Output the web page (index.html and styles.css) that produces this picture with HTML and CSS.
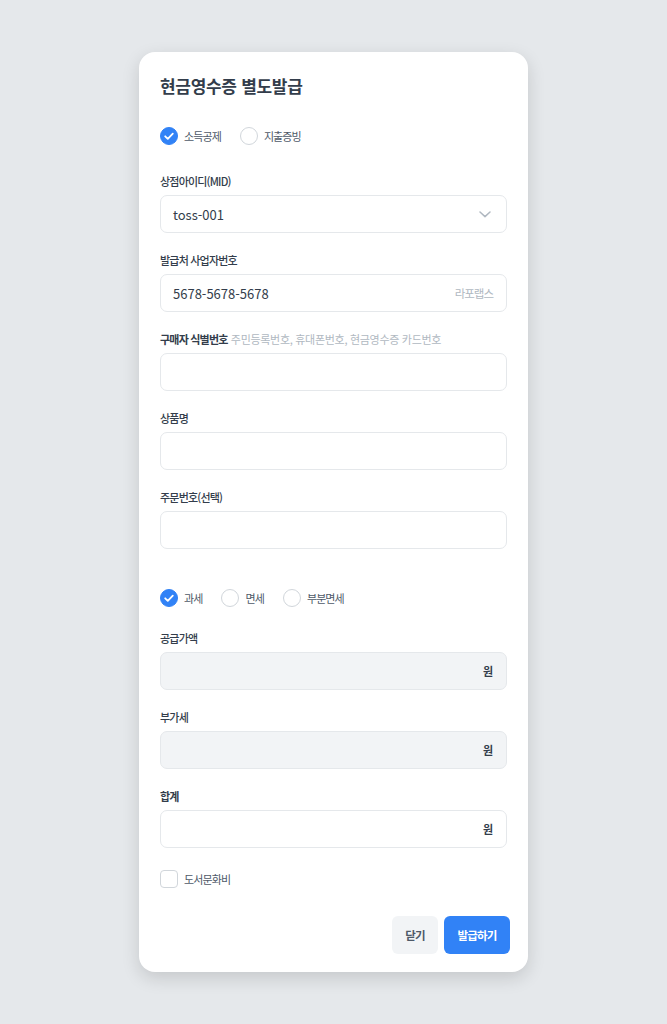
FILE: index.html
```html
<!DOCTYPE html>
<html lang="ko">
<head>
    <meta charset="UTF-8">
    <title>현금영수증 별도발급</title>
    <link rel="stylesheet" href="styles.css">
</head>
<body>
    <div class="modal">
        <h2 class="modal-title">현금영수증 별도발급</h2>

        <!-- 발급 용도 -->
        <div class="choice-row first-row">
            <label class="choice">
                <span class="radio checked">
                    <svg width="18" height="18" viewBox="0 0 18 18"><path d="M5.2 9.3l2.6 2.6 5-5.2" fill="none" stroke="#fff" stroke-width="1.8" stroke-linecap="round" stroke-linejoin="round"/></svg>
                </span>
                <span class="choice-text">소득공제</span>
            </label>
            <label class="choice">
                <span class="radio"></span>
                <span class="choice-text">지출증빙</span>
            </label>
        </div>

        <div class="field-group">
            <div class="field">
                <div class="field-label">상점아이디(MID)</div>
                <div class="field-box">
                    <span class="field-value">toss-001</span>
                    <svg class="chevron" width="12" height="7" viewBox="0 0 12 7"><path d="M1 1l5 4.6L11 1" fill="none" stroke="#b0b8c1" stroke-width="1.5" stroke-linecap="round" stroke-linejoin="round"/></svg>
                </div>
            </div>

            <div class="field">
                <div class="field-label">발급처 사업자번호</div>
                <div class="field-box">
                    <span class="field-value">5678-5678-5678</span>
                    <span class="field-suffix muted">라포랩스</span>
                </div>
            </div>

            <div class="field">
                <div class="field-label strong">구매자 식별번호 <span class="field-hint">주민등록번호, 휴대폰번호, 현금영수증 카드번호</span></div>
                <div class="field-box"></div>
            </div>

            <div class="field">
                <div class="field-label">상품명</div>
                <div class="field-box"></div>
            </div>

            <div class="field">
                <div class="field-label">주문번호(선택)</div>
                <div class="field-box"></div>
            </div>
        </div>

        <!-- 과세 구분 -->
        <div class="choice-row tax-row">
            <label class="choice">
                <span class="radio checked">
                    <svg width="18" height="18" viewBox="0 0 18 18"><path d="M5.2 9.3l2.6 2.6 5-5.2" fill="none" stroke="#fff" stroke-width="1.8" stroke-linecap="round" stroke-linejoin="round"/></svg>
                </span>
                <span class="choice-text">과세</span>
            </label>
            <label class="choice">
                <span class="radio"></span>
                <span class="choice-text">면세</span>
            </label>
            <label class="choice">
                <span class="radio"></span>
                <span class="choice-text">부분면세</span>
            </label>
        </div>

        <div class="field-group">
            <div class="field">
                <div class="field-label">공급가액</div>
                <div class="field-box disabled">
                    <span class="field-suffix won">원</span>
                </div>
            </div>

            <div class="field">
                <div class="field-label">부가세</div>
                <div class="field-box disabled">
                    <span class="field-suffix won">원</span>
                </div>
            </div>

            <div class="field">
                <div class="field-label strong">합계</div>
                <div class="field-box">
                    <span class="field-suffix won">원</span>
                </div>
            </div>
        </div>

        <label class="choice check-row">
            <span class="checkbox"></span>
            <span class="choice-text">도서문화비</span>
        </label>

        <div class="modal-footer">
            <button class="btn btn-light">닫기</button>
            <button class="btn btn-primary">발급하기</button>
        </div>
    </div>
</body>
</html>
```

FILE: styles.css
```css
* {
    margin: 0;
    padding: 0;
    box-sizing: border-box;
    font-family: 'Noto Sans CJK KR', 'Noto Sans', sans-serif;
}

body {
    min-height: 100vh;
    background: #e5e8eb;
    padding-top: 52px;
}

.modal {
    width: 389px;
    margin: 0 auto;
    background: #fff;
    border-radius: 16px;
    padding: 22px 21px 18px 21px;
    box-shadow: 0 6px 18px rgba(0, 0, 0, 0.14);
    display: flex;
    flex-direction: column;
}

.modal-title {
    font-size: 17px;
    line-height: 24px;
    font-weight: 700;
    color: #333d4b;
    letter-spacing: -0.3px;
}

/* 라디오 / 체크박스 */
.choice-row {
    display: flex;
    gap: 19px;
}

.first-row {
    margin-top: 29px;
    margin-bottom: 28px;
}

.tax-row {
    margin-top: 40px;
    margin-bottom: 23px;
}

.choice {
    display: flex;
    align-items: center;
    gap: 6px;
    height: 18px;
    cursor: pointer;
}

.choice-text {
    font-size: 11px;
    color: #4e5968;
    letter-spacing: -0.9px;
}

.radio {
    width: 18px;
    height: 18px;
    border-radius: 50%;
    border: 1.5px solid #d1d6db;
    display: flex;
    align-items: center;
    justify-content: center;
}

.radio.checked {
    background: #3182f6;
    border-color: #3182f6;
}

.radio svg {
    flex: none;
}

.checkbox {
    width: 18px;
    height: 18px;
    border-radius: 4px;
    border: 1.5px solid #d1d6db;
}

.check-row {
    margin-top: 22px;
    align-self: flex-start;
}

/* 입력 필드 */
.field-group {
    display: flex;
    flex-direction: column;
    gap: 19px;
}

.field {
    display: flex;
    flex-direction: column;
    gap: 6px;
}

.field-label {
    font-size: 11px;
    line-height: 16px;
    font-weight: 500;
    color: #333d4b;
    letter-spacing: -0.8px;
}

.field-label.strong {
    font-weight: 700;
}

.field-hint {
    font-weight: 400;
    color: #b0b8c1;
    letter-spacing: -0.3px;
    margin-left: 1px;
}

.field-box {
    height: 38px;
    border: 1px solid #e5e8eb;
    border-radius: 7px;
    padding: 0 13px 0 12px;
    display: flex;
    align-items: center;
    justify-content: space-between;
}

.field-box.disabled {
    background: #f2f4f6;
}

.field-value {
    font-size: 13px;
    color: #333d4b;
}

.field-suffix {
    margin-left: auto;
    font-size: 11px;
    letter-spacing: -1px;
}

.field-suffix.muted {
    color: #b0b8c1;
    font-size: 11.5px;
}

.field-suffix.won {
    color: #333d4b;
    font-weight: 700;
    margin-right: 1px;
}

.chevron {
    margin-right: 2px;
}

/* 하단 버튼 */
.modal-footer {
    display: flex;
    justify-content: flex-end;
    gap: 6px;
    margin-top: 28px;
    margin-right: -3px;
}

.btn {
    height: 38px;
    border: none;
    border-radius: 6px;
    font-size: 11.5px;
    font-weight: 700;
    letter-spacing: -0.8px;
    cursor: pointer;
}

.btn-light {
    width: 46px;
    background: #f2f4f6;
    color: #4e5968;
}

.btn-primary {
    width: 66px;
    background: #3182f6;
    color: #fff;
}
```
